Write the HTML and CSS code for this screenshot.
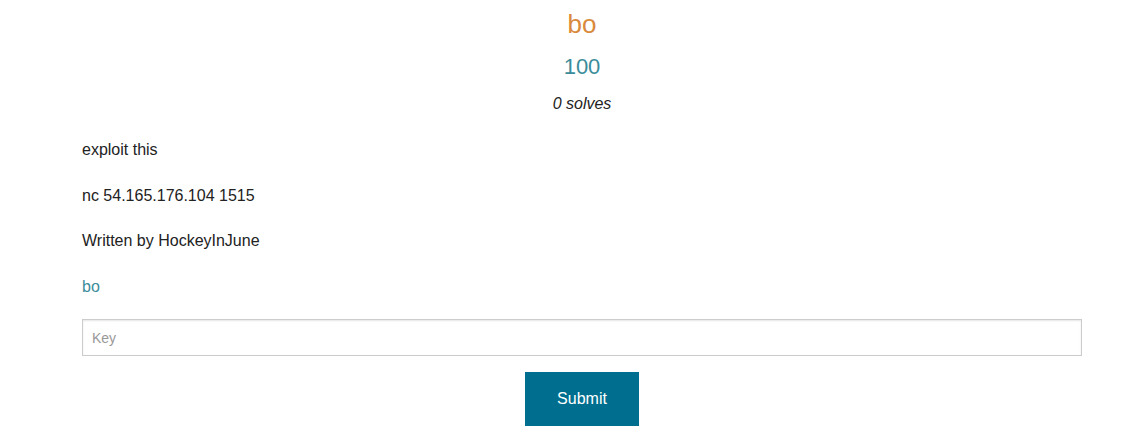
FILE: index.html
```html
<!DOCTYPE html>
<html>
<head>
<meta charset="utf-8">
<link rel="stylesheet" href="styles.css">
</head>
<body>
<div class="page">
  <div class="chal">
    <h3 class="chal-name">bo</h3>
    <h4 class="chal-value">100</h4>
    <p class="chal-solves">0 solves</p>
    <div class="chal-desc">
      <p>exploit this</p>
      <p>nc 54.165.176.104 1515</p>
      <p>Written by HockeyInJune</p>
      <p><a href="#" class="chal-file">bo</a></p>
    </div>
    <form class="key-form">
      <input class="key-input" type="text" placeholder="Key">
      <div class="submit-row">
        <button class="submit-btn" type="button">Submit</button>
      </div>
    </form>
  </div>
</div>
</body>
</html>
```

FILE: styles.css
```css
html, body {
  margin: 0;
  padding: 0;
  background: #fff;
}
body {
  font-family: "Liberation Sans", Arial, Helvetica, sans-serif;
  color: #222;
  font-size: 16px;
}
.page {
  padding-left: 82px;
  width: 1000px;
}
.chal-name {
  margin: 0;
  padding-top: 6px;
  text-align: center;
  font-size: 26px;
  font-weight: normal;
  line-height: 36px;
  color: #d98a3c;
}
.chal-value {
  margin: 0;
  padding-top: 10px;
  text-align: center;
  font-size: 22px;
  font-weight: normal;
  line-height: 30px;
  color: #3b8c9a;
}
.chal-solves {
  margin: 0;
  padding-top: 10px;
  text-align: center;
  font-style: italic;
  font-size: 16px;
  line-height: 24px;
}
.chal-desc {
  padding-top: 21px;
}
.chal-desc p {
  margin: 0 0 20px;
  font-size: 16px;
  line-height: 25.6px;
}
.chal-file {
  color: #3b8c9a;
  text-decoration: none;
}
.key-form {
  margin: 0;
}
.key-input {
  display: block;
  box-sizing: border-box;
  width: 100%;
  height: 37px;
  margin: 0 0 16px;
  padding: 8px 9px;
  border: 1px solid #ccc;
  box-shadow: inset 0 1px 2px rgba(0,0,0,0.1);
  font-family: "Liberation Sans", Arial, Helvetica, sans-serif;
  font-size: 14px;
  color: #222;
  background: #fff;
  outline: none;
}
.key-input::placeholder {
  color: #999;
}
.submit-row {
  display: flex;
  justify-content: center;
}
.submit-btn {
  width: 114px;
  height: 54px;
  border: none;
  background: #006f8f;
  color: #fff;
  font-family: "Liberation Sans", Arial, Helvetica, sans-serif;
  font-size: 16px;
  padding: 0;
  cursor: pointer;
}
```
